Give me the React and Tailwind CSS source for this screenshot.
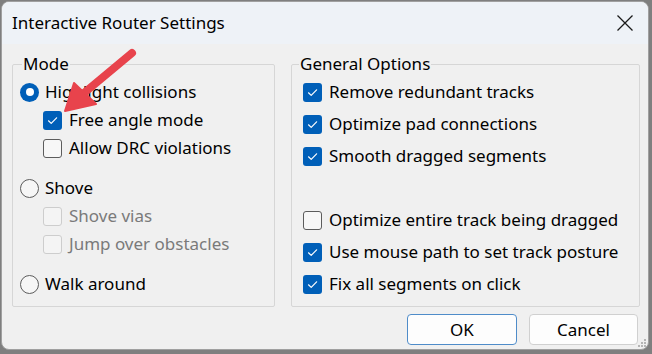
import React from "react";

const font = { fontFamily: '"Noto Sans", "Open Sans", sans-serif' };

function Check({ checked, disabled }) {
  if (checked) {
    return (
      <span className="flex h-[19px] w-[19px] shrink-0 items-center justify-center rounded-[3px] bg-[#005fb8]">
        <svg width="19" height="19" viewBox="0 0 19 19">
          <path d="M5.5 9.8 L8.2 12.4 L13.6 6.8" fill="none" stroke="#ffffff" strokeWidth="1.2" strokeLinecap="round" strokeLinejoin="round" />
        </svg>
      </span>
    );
  }
  return (
    <span
      className={
        disabled
          ? "h-[19px] w-[19px] shrink-0 rounded-[3px] border border-[#cdcdcd] bg-[#f4f4f4]"
          : "h-[19px] w-[19px] shrink-0 rounded-[3px] border border-[#5c5c5c] bg-[#f7f7f7]"
      }
    />
  );
}

function Radio({ checked }) {
  if (checked) {
    return (
      <span className="flex h-[19px] w-[19px] shrink-0 items-center justify-center rounded-full bg-[#005fb8]">
        <span className="h-[8px] w-[8px] rounded-full bg-white" />
      </span>
    );
  }
  return <span className="h-[19px] w-[19px] shrink-0 rounded-full border border-[#5c5c5c] bg-[#f6f6f6]" />;
}

function CheckRow({ label, checked, disabled, h = "h-[28px]" }) {
  return (
    <div className={`flex ${h} items-center gap-[7px]`}>
      <Check checked={checked} disabled={disabled} />
      <span className={disabled ? "text-[#7a7a7a]" : "text-black"}>{label}</span>
    </div>
  );
}

function RadioRow({ label, checked }) {
  return (
    <div className="flex h-[28px] items-center gap-[6px]">
      <Radio checked={checked} />
      <span className="text-black">{label}</span>
    </div>
  );
}

export default function App() {
  return (
    <div className="h-[354px] w-[652px] overflow-hidden bg-[#7f7f7f] pl-[1px] pt-[1px]" style={font}>
      <div className="relative flex h-[349px] w-[648px] flex-col overflow-hidden rounded-[8px] border border-[#a0a0a0] bg-[#f0f0f0] text-[17px] leading-[24px]">
        <div className="flex h-[42px] shrink-0 items-center justify-between bg-[#eef2f7] pl-[10px] pr-[14px]">
          <span className="text-[17px] text-black">Interactive Router Settings</span>
          <svg width="18" height="18" viewBox="0 0 18 18">
            <path d="M1.5 1.5 L16.5 16.5 M16.5 1.5 L1.5 16.5" stroke="#1a1a1a" strokeWidth="1.3" />
          </svg>
        </div>
        <div className="flex flex-col pl-[10px] pr-[8px] pt-[8px]">
          <div className="flex gap-[16px]">
            <fieldset className="m-0 w-[263px] shrink-0 rounded-[2px] border border-[#d6d6d6] pb-[8px] pl-[7px] pt-[2px]">
              <legend className="ml-[2px] px-[1px] text-black">Mode</legend>
              <RadioRow label="Highlight collisions" checked />
              <div className="pl-[23px]">
                <CheckRow label="Free angle mode" checked />
                <CheckRow label="Allow DRC violations" />
              </div>
              <div className="mt-[12px]">
                <RadioRow label="Shove" />
              </div>
              <div className="pl-[23px]">
                <CheckRow label="Shove vias" disabled />
                <CheckRow label="Jump over obstacles" disabled />
              </div>
              <div className="mt-[12px]">
                <RadioRow label="Walk around" />
              </div>
            </fieldset>
            <fieldset className="m-0 w-[349px] shrink-0 rounded-[2px] border border-[#d6d6d6] pb-[6px] pl-[11px] pt-0">
              <legend className="ml-[-4px] px-[1px] text-black">General Options</legend>
              <CheckRow label="Remove redundant tracks" checked h="h-[32px]" />
              <CheckRow label="Optimize pad connections" checked h="h-[32px]" />
              <CheckRow label="Smooth dragged segments" checked h="h-[32px]" />
              <div className="h-[32px]" />
              <CheckRow label="Optimize entire track being dragged" h="h-[32px]" />
              <CheckRow label="Use mouse path to set track posture" checked h="h-[32px]" />
              <CheckRow label="Fix all segments on click" checked h="h-[32px]" />
            </fieldset>
          </div>
          <div className="mt-[7px] flex justify-end gap-[12px] pr-[2px]">
            <button className="h-[31px] w-[110px] rounded-[4px] border border-[#4f8cc9] bg-[#fdfdfd] text-black">OK</button>
            <button className="h-[31px] w-[109px] rounded-[4px] border border-[#d0d0d0] bg-[#fdfdfd] text-black">Cancel</button>
          </div>
        </div>
        <svg className="absolute left-0 top-0" width="648" height="349" viewBox="0 0 648 349">
          <line x1="130" y1="51" x2="82" y2="91" stroke="#e8434c" strokeWidth="8" strokeLinecap="round" />
          <polygon points="63,109 72,81 94,102" fill="#e8434c" stroke="#e8434c" strokeWidth="2" strokeLinejoin="round" />
        </svg>
        <svg className="absolute bottom-[1px] right-[1px]" width="10" height="10" viewBox="0 0 10 10">
          <rect x="7" y="1" width="2" height="2" fill="#b5b5b5" />
          <rect x="4" y="4" width="2" height="2" fill="#b5b5b5" />
          <rect x="7" y="4" width="2" height="2" fill="#b5b5b5" />
          <rect x="1" y="7" width="2" height="2" fill="#b5b5b5" />
          <rect x="4" y="7" width="2" height="2" fill="#b5b5b5" />
          <rect x="7" y="7" width="2" height="2" fill="#b5b5b5" />
        </svg>
      </div>
    </div>
  );
}
